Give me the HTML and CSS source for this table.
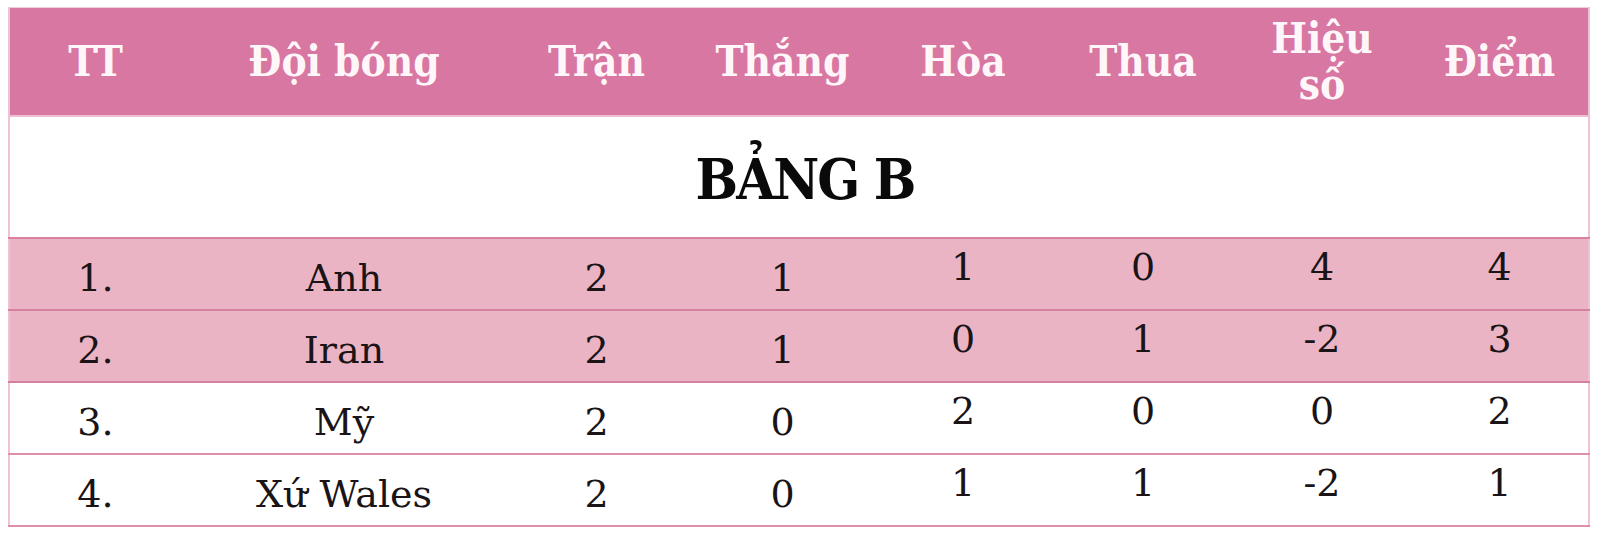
FILE: index.html
```html
<!DOCTYPE html>
<html lang="vi">
<head>
<meta charset="utf-8">
<title>Bảng B</title>
<link rel="stylesheet" href="styles.css">
</head>
<body>
<table class="standings">
  <colgroup>
    <col class="c-tt"><col class="c-team"><col class="c-n1"><col class="c-n2"><col class="c-n3"><col class="c-n4"><col class="c-n5"><col class="c-n6">
  </colgroup>
  <thead>
    <tr class="head">
      <th class="tt">TT</th><th>Đội bóng</th><th>Trận</th><th>Thắng</th><th>Hòa</th><th>Thua</th><th class="wrap">Hiệu<br>số</th><th>Điểm</th>
    </tr>
  </thead>
  <tbody>
    <tr class="group"><td colspan="8">BẢNG B</td></tr>
    <tr class="row pink">
      <td class="tt">1.</td><td>Anh</td><td>2</td><td>1</td><td class="up">1</td><td class="up">0</td><td class="up">4</td><td class="up">4</td>
    </tr>
    <tr class="row pink">
      <td class="tt">2.</td><td>Iran</td><td>2</td><td>1</td><td class="up">0</td><td class="up">1</td><td class="up">-2</td><td class="up">3</td>
    </tr>
    <tr class="row">
      <td class="tt">3.</td><td>Mỹ</td><td>2</td><td>0</td><td class="up">2</td><td class="up">0</td><td class="up">0</td><td class="up">2</td>
    </tr>
    <tr class="row">
      <td class="tt">4.</td><td>Xứ Wales</td><td>2</td><td>0</td><td class="up">1</td><td class="up">1</td><td class="up">-2</td><td class="up">1</td>
    </tr>
  </tbody>
</table>
</body>
</html>
```

FILE: styles.css
```css
html, body {
  margin: 0;
  padding: 0;
  background: #ffffff;
}
body {
  padding: 7px 12px 0 8px;
}
.standings {
  width: 1580px;
  table-layout: fixed;
  border-collapse: collapse;
  font-family: "DejaVu Serif", "Liberation Serif", serif;
  border-left: 2px solid #efc3d3;
  border-right: 2px solid #efc3d3;
  border-top: 1px solid #f1cedb;
}
.c-tt { width: 178px; }
.c-team { width: 314px; }
.c-n1 { width: 191px; }
.c-n2 { width: 181px; }
.c-n3 { width: 180px; }
.c-n4 { width: 180px; }
.c-n5 { width: 178px; }
.c-n6 { width: 178px; }

.standings th,
.standings td {
  padding: 0;
  text-align: center;
  vertical-align: middle;
}
.standings .tt {
  padding-right: 6px;
}
.head {
  background: #d877a1;
  height: 108px;
}
.head th {
  color: #fff6fa;
  font-size: 42px;
  font-stretch: condensed;
  font-weight: bold;
  line-height: 46px;
  padding-top: 2px;
  border-bottom: 2px solid #ecc0d0;
}
.group td {
  height: 116px;
  font-size: 56px;
  font-stretch: condensed;
  font-weight: bold;
  color: #0a0a0a;
  letter-spacing: -2px;
  padding-left: 12px;
  padding-top: 4px;
  border-bottom: 2px solid #d9819f;
}
.row {
  height: 72px;
}
.row td {
  font-size: 38px;
  color: #1a1416;
  border-bottom: 2px solid #dd8fab;
  padding-top: 8px;
}
.row td.up {
  padding-top: 0;
  padding-bottom: 14px;
}
.row.pink {
  background: #ebb4c4;
}
.row.pink td {
  border-bottom-color: #d6809f;
}
```
